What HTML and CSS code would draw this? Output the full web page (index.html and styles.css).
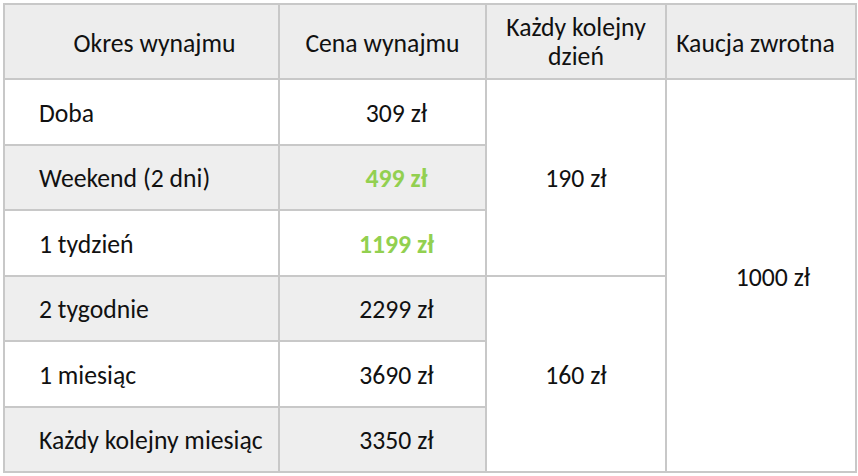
FILE: index.html
```html
<!DOCTYPE html>
<html lang="pl">
<head>
<meta charset="utf-8">
<link rel="stylesheet" href="styles.css">
</head>
<body>
<table class="price-table">
  <colgroup>
    <col class="c1"><col class="c2"><col class="c3"><col class="c4">
  </colgroup>
  <thead>
    <tr class="head">
      <th class="h-period single">Okres wynajmu</th>
      <th class="single">Cena wynajmu</th>
      <th class="double">Każdy kolejny<br>dzień</th>
      <th class="h-deposit single">Kaucja zwrotna</th>
    </tr>
  </thead>
  <tbody>
    <tr class="white">
      <td class="label">Doba</td>
      <td class="price">309 zł</td>
      <td class="extra" rowspan="3">190 zł</td>
      <td class="deposit" rowspan="6">1000 zł</td>
    </tr>
    <tr class="grey">
      <td class="label">Weekend (2 dni)</td>
      <td class="price promo">499 zł</td>
    </tr>
    <tr class="white">
      <td class="label">1 tydzień</td>
      <td class="price promo">1199 zł</td>
    </tr>
    <tr class="grey">
      <td class="label">2 tygodnie</td>
      <td class="price">2299 zł</td>
      <td class="extra" rowspan="3">160 zł</td>
    </tr>
    <tr class="white">
      <td class="label">1 miesiąc</td>
      <td class="price">3690 zł</td>
    </tr>
    <tr class="grey">
      <td class="label">Każdy kolejny miesiąc</td>
      <td class="price">3350 zł</td>
    </tr>
  </tbody>
</table>
</body>
</html>
```
FILE: styles.css
```css
html, body {
  margin: 0;
  background: #ffffff;
}
body {
  padding: 3px 0 0 3px;
  font-family: Calibri, Carlito, "Open Sans", sans-serif;
  font-size: 25.7px;
  color: #111111;
}
.price-table {
  border-collapse: collapse;
  table-layout: fixed;
  width: 852px;
}
.c1 { width: 275px; }
.c2 { width: 207px; }
.c3 { width: 180px; }
.c4 { width: 190px; }
.price-table th,
.price-table td {
  border: 2px solid #c8c8c8;
  vertical-align: middle;
  padding: 0;
}
.head th {
  background: #ededed;
  font-weight: normal;
  height: 73px;
  text-align: center;
  line-height: 29px;
}
.head th.single { padding-top: 4px; height: 69px; }
.head th.h-period { padding-left: 26px; }
.head th.h-deposit { padding-right: 11px; }
tbody td {
  height: 60.5px;
  padding-top: 3px !important;
}
tr.grey td.label, tr.grey td.price { background: #eeeeee; }
tr.white td { background: #ffffff; }
td.extra, td.deposit { background: #ffffff; }
.label {
  text-align: left;
  padding-left: 34px !important;
}
.price {
  text-align: center;
  padding-left: 28px !important;
}
.extra { text-align: center; }
.deposit {
  text-align: center;
  padding-left: 24px !important;
}
.promo {
  color: #92d050;
  font-weight: bold;
}
```
